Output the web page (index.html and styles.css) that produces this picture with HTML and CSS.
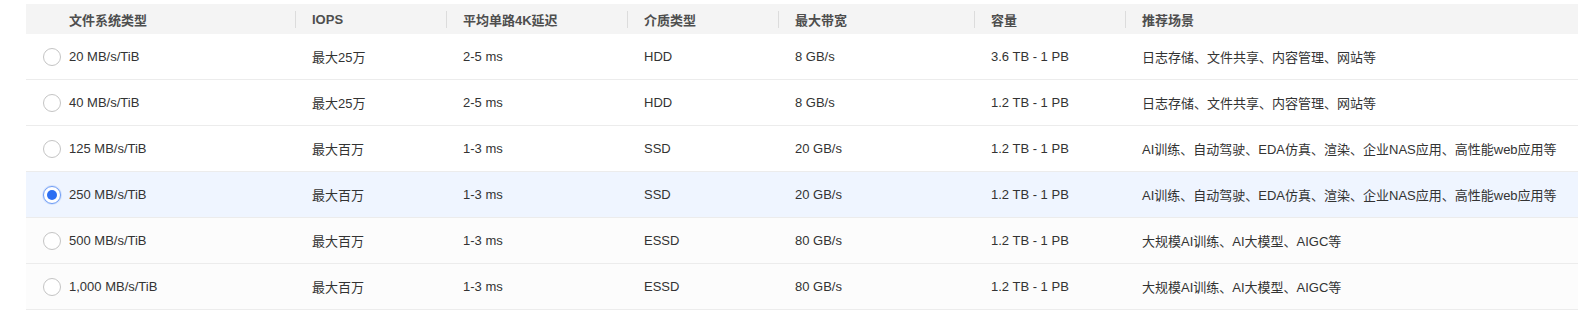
FILE: index.html
```html
<!DOCTYPE html>
<html lang="zh-CN">
<head>
<meta charset="utf-8">
<title>文件系统类型</title>
<link rel="stylesheet" href="styles.css">
</head>
<body>
<div class="wrap">
  <div class="table">
    <div class="row head">
      <div class="cell first">文件系统类型</div>
      <div class="cell">IOPS</div>
      <div class="cell">平均单路4K延迟</div>
      <div class="cell">介质类型</div>
      <div class="cell">最大带宽</div>
      <div class="cell">容量</div>
      <div class="cell">推荐场景</div>
    </div>
    <div class="row">
      <div class="cell first"><span class="radio"></span>20 MB/s/TiB</div>
      <div class="cell">最大25万</div>
      <div class="cell">2-5 ms</div>
      <div class="cell">HDD</div>
      <div class="cell">8 GB/s</div>
      <div class="cell">3.6 TB - 1 PB</div>
      <div class="cell">日志存储、文件共享、内容管理、网站等</div>
    </div>
    <div class="row">
      <div class="cell first"><span class="radio"></span>40 MB/s/TiB</div>
      <div class="cell">最大25万</div>
      <div class="cell">2-5 ms</div>
      <div class="cell">HDD</div>
      <div class="cell">8 GB/s</div>
      <div class="cell">1.2 TB - 1 PB</div>
      <div class="cell">日志存储、文件共享、内容管理、网站等</div>
    </div>
    <div class="row">
      <div class="cell first"><span class="radio"></span>125 MB/s/TiB</div>
      <div class="cell">最大百万</div>
      <div class="cell">1-3 ms</div>
      <div class="cell">SSD</div>
      <div class="cell">20 GB/s</div>
      <div class="cell">1.2 TB - 1 PB</div>
      <div class="cell">AI训练、自动驾驶、EDA仿真、渲染、企业NAS应用、高性能web应用等</div>
    </div>
    <div class="row selected">
      <div class="cell first"><span class="radio checked"></span>250 MB/s/TiB</div>
      <div class="cell">最大百万</div>
      <div class="cell">1-3 ms</div>
      <div class="cell">SSD</div>
      <div class="cell">20 GB/s</div>
      <div class="cell">1.2 TB - 1 PB</div>
      <div class="cell">AI训练、自动驾驶、EDA仿真、渲染、企业NAS应用、高性能web应用等</div>
    </div>
    <div class="row muted">
      <div class="cell first"><span class="radio"></span>500 MB/s/TiB</div>
      <div class="cell">最大百万</div>
      <div class="cell">1-3 ms</div>
      <div class="cell">ESSD</div>
      <div class="cell">80 GB/s</div>
      <div class="cell">1.2 TB - 1 PB</div>
      <div class="cell">大规模AI训练、AI大模型、AIGC等</div>
    </div>
    <div class="row muted">
      <div class="cell first"><span class="radio"></span>1,000 MB/s/TiB</div>
      <div class="cell">最大百万</div>
      <div class="cell">1-3 ms</div>
      <div class="cell">ESSD</div>
      <div class="cell">80 GB/s</div>
      <div class="cell">1.2 TB - 1 PB</div>
      <div class="cell">大规模AI训练、AI大模型、AIGC等</div>
    </div>
  </div>
</div>
</body>
</html>
```

FILE: styles.css
```css
html, body {
  margin: 0;
  padding: 0;
  background: #ffffff;
}

body {
  font-family: "Liberation Sans", "Noto Sans CJK SC", sans-serif;
  font-size: 13px;
  color: #333333;
}

.wrap {
  padding: 4px 4px 0 26px;
}

.table {
  display: flex;
  flex-direction: column;
}

.row {
  display: grid;
  grid-template-columns: 269px 151px 181px 151px 196px 151px 1fr;
  height: 46px;
  border-bottom: 1px solid #ececec;
  box-sizing: border-box;
  background: #ffffff;
}

.row.selected {
  background: #eff5ff;
}

.row.muted {
  background: #fcfcfc;
}

.cell {
  display: flex;
  align-items: center;
  padding-left: 17px;
  white-space: nowrap;
}

.cell.first {
  padding-left: 17px;
}

.head {
  height: 30px;
  border-bottom: none;
  background: #f4f4f4;
  color: #4e4e4e;
  font-weight: 600;
}

.head .cell {
  padding-left: 0;
}

.head .cell.first {
  padding-left: 43px;
}

.head .cell + .cell::before {
  content: "";
  display: block;
  width: 1px;
  height: 17px;
  background: #dcdcdc;
  margin-right: 16px;
}

.radio {
  box-sizing: border-box;
  width: 18px;
  height: 18px;
  border: 1px solid #c4c4c4;
  border-radius: 50%;
  background: #ffffff;
  margin-right: 8px;
  display: flex;
  align-items: center;
  justify-content: center;
  flex: none;
}

.radio.checked {
  border: 1px solid #6f9df5;
  box-shadow: 0 0 0 1px #d3e2fd;
}

.radio.checked::after {
  content: "";
  width: 10px;
  height: 10px;
  border-radius: 50%;
  background: #2d6ff2;
}
```
